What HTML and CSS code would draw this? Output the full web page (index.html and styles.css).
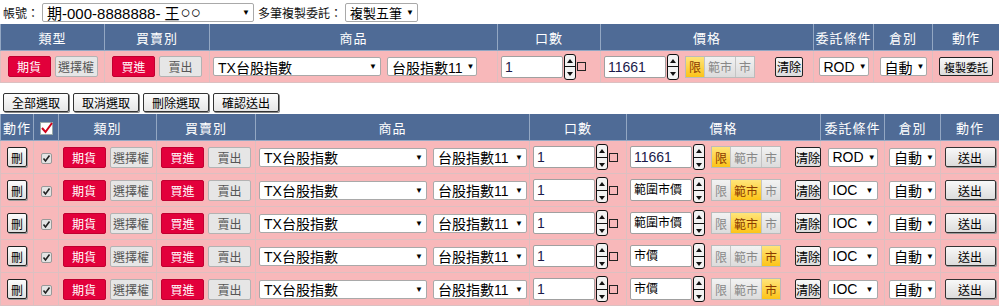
FILE: index.html
```html
<!DOCTYPE html>
<html lang="zh-Hant">
<head>
  <meta charset="UTF-8" />
  <title>期貨下單</title>
  <link rel="stylesheet" href="styles.css">
</head>
<body>
  <div class="topbar">
    <span class="label">帳號：</span>
    <span class="sel acct">期-000-8888888- 王<span class="oo">○○</span><i>▼</i></span>
    <span class="label">多筆複製委託：</span>
    <span class="sel copy">複製五筆<i>▼</i></span>
  </div>

  <table class="grid single">
    <colgroup>
      <col style="width:104px"><col style="width:105px"><col style="width:288px"><col style="width:103px">
      <col style="width:213px"><col style="width:60px"><col style="width:59px"><col style="width:67px">
    </colgroup>
    <tr class="head">
      <th>類型</th><th>買賣別</th><th>商品</th><th>口數</th><th>價格</th><th>委託條件</th><th>倉別</th><th>動作</th>
    </tr>
    <tr class="row">
      <td><span class="btn red">期貨</span><span class="btn grey">選擇權</span></td>
      <td><span class="btn red">買進</span><span class="btn grey">賣出</span></td>
      <td class="left"><span class="sel prod">TX台股指數<i>▼</i></span><span class="sel month">台股指數11<i>▼</i></span></td>
      <td class="left"><span class="num"><span class="field">1</span><span class="spin"><b class="up"></b><b class="dn"></b></span><span class="tick"></span></span></td>
      <td class="left"><span class="num"><span class="field">11661</span><span class="spin"><b class="up"></b><b class="dn"></b></span></span><span class="ptype"><span class="on">限</span><span>範市</span><span>市</span></span><span class="btn clear">清除</span></td>
      <td><span class="sel cond">ROD<i>▼</i></span></td>
      <td><span class="sel pos">自動<i>▼</i></span></td>
      <td><span class="btn dup">複製委託</span></td>
    </tr>
  </table>

  <div class="tools">
    <span class="btn tool">全部選取</span>
    <span class="btn tool">取消選取</span>
    <span class="btn tool">刪除選取</span>
    <span class="btn tool">確認送出</span>
  </div>

  <table class="grid multi">
    <colgroup>
      <col style="width:33px"><col style="width:25px"><col style="width:98px"><col style="width:99px"><col style="width:274px">
      <col style="width:97px"><col style="width:194px"><col style="width:64px"><col style="width:56px"><col style="width:59px">
    </colgroup>
    <tr class="head">
      <th>動作</th>
      <th><svg class="allchk" width="13" height="13" viewBox="0 0 13 13"><rect x="0.5" y="0.5" width="12" height="12" fill="#fff" stroke="#9aa"/><path d="M2 6 L5.5 10 L12 1" fill="none" stroke="#d0021b" stroke-width="2"/></svg></th>
      <th>類別</th><th>買賣別</th><th>商品</th><th>口數</th><th>價格</th><th>委託條件</th><th>倉別</th><th>動作</th>
    </tr>
  </table>

  <script>
    const orders = [
      { price: '11661', type: 0, cond: 'ROD' },
      { price: '範圍市價', type: 1, cond: 'IOC' },
      { price: '範圍市價', type: 1, cond: 'IOC' },
      { price: '市價', type: 2, cond: 'IOC' },
      { price: '市價', type: 2, cond: 'IOC' }
    ];
    const table = document.querySelector('.multi');
    const labels = ['限', '範市', '市'];

    orders.forEach(o => {
      const tr = document.createElement('tr');
      tr.className = 'row';
      const types = labels.map((l, i) => `<span class="${i === o.type ? 'on' : ''}">${l}</span>`).join('');
      tr.innerHTML = `
        <td><span class="btn del">刪</span></td>
        <td><svg class="chk" width="11" height="11" viewBox="0 0 11 11"><rect x="0.5" y="0.5" width="10" height="10" rx="1.5" fill="#e4e4e4" stroke="#999"/><path d="M2.5 5.5 L4.5 8 L8.5 2.5" fill="none" stroke="#222" stroke-width="1.6"/></svg></td>
        <td><span class="btn red">期貨</span><span class="btn grey">選擇權</span></td>
        <td><span class="btn red">買進</span><span class="btn grey">賣出</span></td>
        <td class="left"><span class="sel prod">TX台股指數<i>▼</i></span><span class="sel month">台股指數11<i>▼</i></span></td>
        <td class="left"><span class="num"><span class="field">1</span><span class="spin"><b class="up"></b><b class="dn"></b></span><span class="tick"></span></span></td>
        <td class="left"><span class="num"><span class="field ${o.type ? 'cjk' : ''}">${o.price}</span><span class="spin"><b class="up"></b><b class="dn"></b></span></span><span class="ptype">${types}</span><span class="btn clear">清除</span></td>
        <td><span class="sel cond">${o.cond}<i>▼</i></span></td>
        <td><span class="sel pos">自動<i>▼</i></span></td>
        <td><span class="btn send">送出</span></td>`;
      table.appendChild(tr);
    });
  </script>
</body>
</html>
```

FILE: styles.css
```css
body {
  margin: 0;
  background-color: #fff;
  font-family: 'Liberation Sans', 'Noto Sans CJK TC', sans-serif;
  font-size: 13px;
  color: #000;
}
.topbar {
  display: flex;
  align-items: center;
  height: 24px;
  padding-left: 3px;
}
.label {
  font-size: 12px;
  margin-right: 3px;
  color: #111;
}
.sel {
  display: inline-flex;
  align-items: center;
  justify-content: space-between;
  box-sizing: border-box;
  height: 19px;
  padding: 0 3px 0 4px;
  background-color: #fff;
  border: 1px solid #a9a9a9;
  border-radius: 2px;
  font-size: 14px;
  color: #000;
  white-space: nowrap;
  overflow: hidden;
  vertical-align: middle;
}
.sel i {
  flex: none;
  font-style: normal;
  font-size: 8px;
  margin-left: 4px;
}
.acct {
  width: 212px;
  margin-right: 4px;
  font-size: 15px;
  justify-content: flex-start;
  overflow: visible;
}
.acct i { margin-left: auto; }
.oo { font-size: 17px; line-height: 1; margin-left: 1px; }
.copy { width: 73px; font-size: 13px; }
.grid {
  border-collapse: collapse;
  table-layout: fixed;
  width: 999px;
}
.head th {
  height: 26px;
  padding: 0;
  background-color: #4f6b96;
  color: #fff;
  font-weight: normal;
  font-size: 13px;
  letter-spacing: 1px;
  white-space: nowrap;
  overflow: hidden;
  border: 1px solid #93a7c3;
  border-top: none;
}
.row td {
  height: 31px;
  padding: 0;
  background-color: #f8b8ba;
  border: 1px solid #dcc0c1;
  text-align: center;
  white-space: nowrap;
}
.multi .row td { height: 32px; }
.row td.left {
  text-align: left;
  padding-left: 3px;
}
.btn {
  display: inline-flex;
  align-items: center;
  justify-content: center;
  box-sizing: border-box;
  vertical-align: middle;
  font-size: 12px;
  border-radius: 2px;
}
.red {
  width: 43px;
  height: 21px;
  background-color: #e2003b;
  border: 1px solid #c00030;
  color: #fff;
  margin: 0 2px;
}
.grey {
  width: 43px;
  height: 21px;
  background-color: #e6e6e6;
  border: 1px solid #b3b3b3;
  color: #555;
  margin: 0 2px;
}
.prod { width: 168px; margin-right: 6px; }
.month { width: 90px; }
.multi .month { width: 94px; }
.num {
  display: inline-flex;
  align-items: center;
  vertical-align: middle;
}
.field {
  box-sizing: border-box;
  width: 62px;
  height: 22px;
  line-height: 20px;
  padding-left: 3px;
  background-color: #fff;
  border: 1px solid #a0a0a0;
  border-radius: 2px;
  font-size: 14px;
  color: #1a1a4a;
}
.field.cjk { font-size: 12px; color: #000; }
.spin {
  display: inline-flex;
  flex-direction: column;
  box-sizing: border-box;
  width: 12px;
  height: 26px;
  margin-left: 1px;
  border: 1px solid #111;
  border-radius: 3px;
  background-color: #f2f2f2;
  overflow: hidden;
}
.spin b {
  flex: 1;
  position: relative;
}
.spin b.up { border-bottom: 1px solid #111; }
.spin b::after {
  content: '';
  position: absolute;
  left: 2px;
  top: 4px;
  border-left: 3px solid transparent;
  border-right: 3px solid transparent;
}
.spin b.up::after { border-bottom: 4px solid #111; }
.spin b.dn::after { border-top: 4px solid #111; top: 5px; }
.tick {
  display: inline-block;
  width: 7px;
  height: 7px;
  margin-left: 1px;
  border: 1px solid #222;
}
.ptype {
  display: inline-flex;
  vertical-align: middle;
  margin-left: 6px;
  margin-right: 20px;
  height: 20px;
  border: 1px solid #bbb;
}
.ptype span {
  display: inline-flex;
  align-items: center;
  padding: 0 3px;
  font-size: 12px;
  color: #888;
  background: linear-gradient(#f2f2f2, #dcdcdc);
  border-right: 1px solid #c4c4c4;
}
.ptype span:last-child { border-right: none; }
.ptype span.on {
  background: linear-gradient(#ffe47a, #fcc418);
  color: #8a3a00;
}
.clear {
  width: 28px;
  height: 20px;
  background: linear-gradient(#f8f8f8, #dcdcdc);
  border: 1px solid #222;
  color: #000;
}
.multi .ptype { margin-right: 14px; }
.multi .clear { width: 26px; }
.cond { width: 50px; }
.pos { width: 47px; }
.dup {
  width: 54px;
  height: 19px;
  background: linear-gradient(#f8f8f8, #dcdcdc);
  border: 1px solid #222;
  font-size: 11px;
}
.send {
  width: 51px;
  height: 20px;
  background: linear-gradient(#f8f8f8, #dcdcdc);
  border: 1px solid #333;
  box-shadow: 1px 1px 0 #999;
}
.del {
  width: 20px;
  height: 20px;
  background: linear-gradient(#fbfbfb, #e0e0e0);
  border: 1px solid #222;
  box-shadow: 1px 1px 0 #999;
}
.tools {
  display: flex;
  gap: 4px;
  padding: 10px 0 2px 3px;
}
.tool {
  width: 66px;
  height: 19px;
  background: linear-gradient(#fdfdfd, #e6e6e6);
  border: 1px solid #333;
  box-shadow: 1px 1px 0 #888;
}
.allchk, .chk { vertical-align: middle; }
```
